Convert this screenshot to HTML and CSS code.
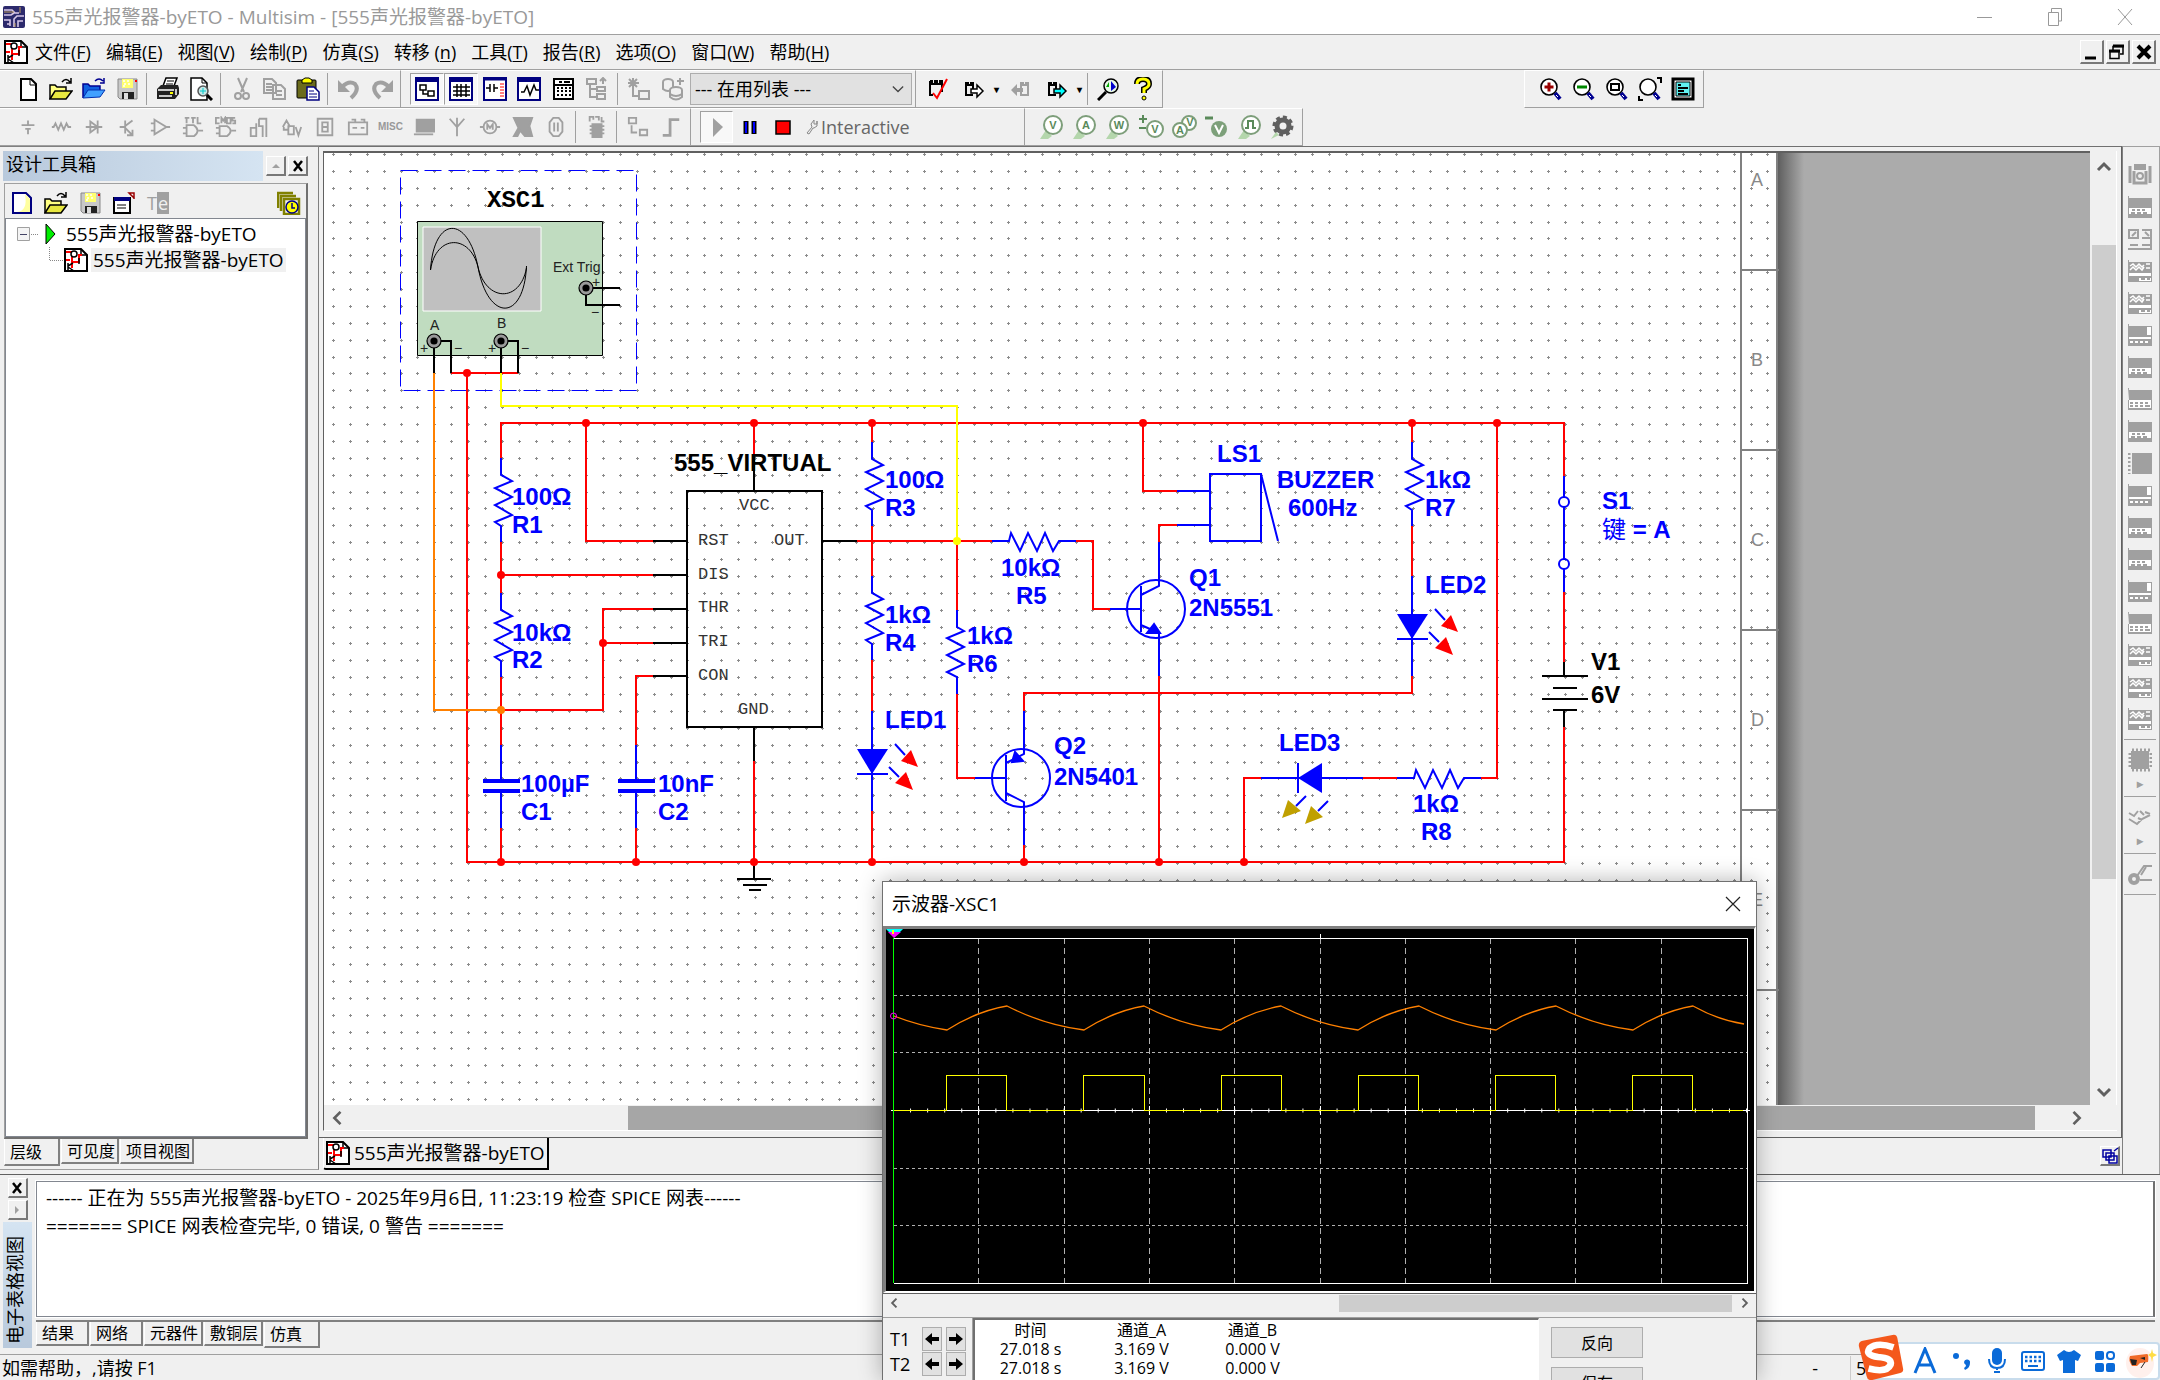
FILE: index.html
```html
<!DOCTYPE html>
<html lang="zh-CN">
<head>
<meta charset="utf-8">
<title>555声光报警器-byETO - Multisim</title>
<link rel="stylesheet" href="styles.css">
</head>
<body>
<svg class="defs" aria-hidden="true">
  <defs>
    <symbol id="i-doc" viewBox="0 0 24 24"><path d="M1 1h16l6 6v16H1z" fill="#fff" stroke="#000" stroke-width="2"/><path d="M17 1v6h6" fill="none" stroke="#000" stroke-width="1.5"/><path d="M2 4h6v16M8 14h7V7h3M2 12h4" fill="none" stroke="#f00" stroke-width="2"/><circle cx="10" cy="6" r="3" fill="#fff" stroke="#000" stroke-width="1.5"/><path d="M4 15v7M4 18l5-3M4 19l6 4M15 10v6" stroke="#000" stroke-width="1.5"/></symbol>
    <symbol id="i-open" viewBox="0 0 24 24"><path d="M1 22V8h5l2 2h9v4" fill="#ffff80" stroke="#000" stroke-width="1.5"/><path d="M1 22l5-8h17l-6 8z" fill="#e8e840" stroke="#000" stroke-width="1.5"/><path d="M13 5q4-5 8 0M22 1v5h-5" fill="none" stroke="#000" stroke-width="1.5"/></symbol>
    <symbol id="i-save" viewBox="0 0 24 24"><path d="M3 2h19v20H5l-2-2z" fill="#c8c8c8" stroke="#888"/><path d="M7 2h11v9H7z" fill="#ffff70"/><path d="M8 4h2M12 4h2M9 7h2M13 7h2M8 9h2" stroke="#fff" stroke-width="1.5"/><path d="M7 15h12v7H7z" fill="#222"/><path d="M9 16h4v6H9z" fill="#ddd"/><path d="M20 4h2" stroke="#f00" stroke-width="2"/></symbol>
    <symbol id="i-mag" viewBox="0 0 24 24"><circle cx="10" cy="10" r="8" fill="#fff" stroke="#000" stroke-width="1.6"/><path d="M16 16l5 6" stroke="#000090" stroke-width="4"/><path d="M17 18l2 2" stroke="#fff"/></symbol>
    <symbol id="i-probe" viewBox="0 0 26 26"><path d="M1 25l6-9 6 6-4 3z" fill="#b4d6ac"/><circle cx="14" cy="11" r="9" fill="#fff" stroke="#7d9e7a" stroke-width="2"/></symbol>
    <symbol id="i-left" viewBox="0 0 12 16"><path d="M10 1L3 8l7 7" fill="none" stroke="#606060" stroke-width="3"/></symbol>
    <symbol id="i-inst1" viewBox="0 0 24 22"><path d="M0 0h1v2h23v20H0V4z" fill="#a0a0a0"/><path d="M1 12h22v6H1z" fill="#fff"/><path d="M4 14h3m2 0h3m2 0h3M3 17h4m2 0h4m2 0h4" stroke="#a0a0a0" stroke-width="2"/></symbol>
    <symbol id="i-inst2" viewBox="0 0 24 22"><path d="M0 0h1v2h23v20H0z" fill="#a0a0a0"/><path d="M1 13h22v2H1zM19 3h4v8h-4z" fill="#fff"/><path d="M2 18h3m2 0h3m2 0h3m2 0h3" stroke="#fff" stroke-width="2"/></symbol>
    <symbol id="i-inst3" viewBox="0 0 24 22"><path d="M0 0h1v2h23v20H0z" fill="#a0a0a0"/><path d="M2 6l3-2 3 3 3-3 3 3 2-2M2 10l3-3 3 3 3-3 3 3 2-3M18 4h4M18 8h4" fill="none" stroke="#fff" stroke-width="1.5"/><path d="M1 13h22v3H1zM11 18h12v3H11z" fill="#fff"/><path d="M13 19h4m2 0h3" stroke="#a0a0a0" stroke-width="2"/></symbol>
    <symbol id="i-inst4" viewBox="0 0 24 22"><path d="M0 0h1v2h23v20H0V12h1z" fill="#a0a0a0"/><path d="M1 12h22v8H1z" fill="#fff"/><path d="M2 15h3m2 0h3m2 0h3m2 0h3M2 18h3m2 0h3m2 0h3m2 0h5" stroke="#a0a0a0" stroke-width="2"/></symbol>
    <symbol id="r-v" overflow="visible"><path d="M0 0V17L11 23L-6 30L11 39L-6 47L11 57L-6 64L0 68V84"/></symbol>
    <symbol id="r-h" overflow="visible"><path d="M0 0H17L19 -8L28 10L36 -8L45 10L53 -8L61 10L67 0H84"/></symbol>
    <symbol id="led" overflow="visible"><path d="M0 -38V62M-15 25H16"/><path d="M-15 0H16L0 25z" fill="#00f" stroke="none"/><path d="M23 -5L33 6M17 18L27 28"/><path d="M39 1L29 12L46 18zM34 23L23 34L41 41z" fill="#f00" stroke="none"/></symbol>
    <symbol id="jack" overflow="visible"><circle r="7" fill="#9a9a9a" stroke="#000" stroke-width="1.2"/><circle r="3.6" fill="#000"/></symbol>
    <pattern id="dots" x="332" y="153" width="135" height="135" patternUnits="userSpaceOnUse">
      <g stroke="#8c8c8c" stroke-width="1" shape-rendering="crispEdges">
        <path id="dotrow" d="M0 1.5h3m-1.5-1.5v3M17 1.5h3m-1.5-1.5v3M34 1.5h3m-1.5-1.5v3M51 1.5h3m-1.5-1.5v3M68 1.5h3m-1.5-1.5v3M84 1.5h3m-1.5-1.5v3M101 1.5h3m-1.5-1.5v3M118 1.5h3m-1.5-1.5v3"/>
        <use href="#dotrow" y="17"/><use href="#dotrow" y="34"/><use href="#dotrow" y="51"/><use href="#dotrow" y="68"/><use href="#dotrow" y="84"/><use href="#dotrow" y="101"/><use href="#dotrow" y="118"/>
      </g>
    </pattern>
    <linearGradient id="shade"><stop offset="0" stop-color="#5c5c5c"/><stop offset="1" stop-color="#ababab"/></linearGradient>
  </defs>
</svg>

<header class="titlebar">
  <svg class="app-icon" viewBox="0 0 22 22"><rect width="22" height="22" rx="2" fill="#2c2a6c"/><path d="M1 4h8l3 3h4M1 9h7l3-2M1 14h6v6M11 21v-8l3-3h7M15 21v-6h5M4 18h3" fill="none" stroke="#d8c8e8" stroke-width="1.6"/><path d="M1 6h10M17 1v6M12 17v4" stroke="#c0a060"/></svg>
  <h1>555声光报警器-byETO - Multisim - [555声光报警器-byETO]</h1>
  <div class="win-controls">
    <button aria-label="最小化"><svg width="16" height="18"><path d="M0 9.500h15" stroke="#999"/></svg></button>
    <button aria-label="还原"><svg width="16" height="20"><path d="M1.500 5.500h10v13h-10zM4.500 5V1.500h10V14H12" fill="none" stroke="#999"/></svg></button>
    <button aria-label="关闭"><svg width="16" height="18"><path d="M1 1l14 16M15 1L1 17" stroke="#999"/></svg></button>
  </div>
</header>

<nav class="menubar">
  <svg class="doc-icon"><use href="#i-doc"/></svg>
  <button>文件(<u>F</u>)</button><button>编辑(<u>E</u>)</button><button>视图(<u>V</u>)</button><button>绘制(<u>P</u>)</button><button>仿真(<u>S</u>)</button><button>转移 (<u>n</u>)</button><button>工具(<u>T</u>)</button><button>报告(<u>R</u>)</button><button>选项(<u>O</u>)</button><button>窗口(<u>W</u>)</button><button>帮助(<u>H</u>)</button>
  <div class="mdi">
    <button class="raised" aria-label="最小化文档"><svg width="20" height="20"><path d="M3 16h11" stroke="#000" stroke-width="3"/></svg></button>
    <button class="raised" aria-label="还原文档"><svg width="20" height="20"><path d="M2 9.500h9v7H2zM5 8V4.500h10V12h-3" fill="none" stroke="#000" stroke-width="1.500"/><path d="M1 9h11M5 4h11" stroke="#000" stroke-width="3"/></svg></button>
    <button class="raised" aria-label="关闭文档"><svg width="20" height="20"><path d="M4 4l12 12M16 4L4 16" stroke="#000" stroke-width="4"/></svg></button>
  </div>
</nav>

<div class="toolbars">
  <div class="toolrow">
    <div class="toolbar main-tools">
      <button aria-label="新建"><svg viewBox="0 0 24 24"><path d="M5 2h10l5 5v16H5z" fill="#fff" stroke="#000" stroke-width="2"/><path d="M14 2v6h6" fill="none" stroke="#000"/></svg></button>
      <button aria-label="打开"><svg><use href="#i-open"/></svg></button>
      <button aria-label="打开示例"><svg viewBox="0 0 24 24"><path d="M1 21V7h5l2 2h10v4" fill="#1060e0" stroke="#000090" stroke-width="1.500"/><path d="M1 21l5-8h17l-5 7z" fill="#40a0ff" stroke="#0030b0"/><path d="M13 4q4-4 8 0M22 1v5h-4" fill="none" stroke="#000090" stroke-width="1.500"/></svg></button>
      <button aria-label="保存"><svg><use href="#i-save"/></svg></button>
      <i class="sep"></i>
      <button aria-label="打印"><svg viewBox="0 0 24 24"><path d="M7 9l3-8h11l-3 8" fill="#fff" stroke="#000" stroke-width="1.500"/><path d="M11 4h7M10 7h7" stroke="#000"/><path d="M1 12l4-4h17l1 3v6l-4 5H1z" fill="#222"/><path d="M2 13h16M3 19h13M20 12v6" stroke="#fff" stroke-width="1.500"/><path d="M14 16h3" stroke="#ff0" stroke-width="2"/></svg></button>
      <button aria-label="打印预览"><svg viewBox="0 0 24 24"><path d="M2 1h11l5 5v17H2z" fill="#fff" stroke="#000" stroke-width="1.500"/><path d="M13 1v5h5" fill="none" stroke="#000"/><circle cx="14" cy="14" r="5" fill="#c8e8e8" stroke="#555" stroke-width="1.500"/><path d="M14 11v6M11 14h6" stroke="#0cc"/><path d="M18 18l5 5" stroke="#000" stroke-width="3"/></svg></button>
      <i class="sep"></i>
      <button aria-label="剪切"><svg viewBox="0 0 24 24"><path d="M8 1l6 14M17 1l-6 14" stroke="#a0a0a0" stroke-width="2"/><circle cx="8" cy="19" r="3" fill="none" stroke="#a0a0a0" stroke-width="2"/><circle cx="16" cy="19" r="3" fill="none" stroke="#a0a0a0" stroke-width="2"/></svg></button>
      <button aria-label="复制"><svg viewBox="0 0 24 24" fill="#f0f0f0" stroke="#a0a0a0" stroke-width="2"><path d="M1 2h8l4 4v10H1zM10 8h8l4 4v10H10zM3 7h6M3 10h6M3 13h6M13 14h6M13 18h6"/></svg></button>
      <button aria-label="粘贴"><svg viewBox="0 0 24 24"><rect x="1" y="3" width="19" height="18" rx="1" fill="#6b6b1c" stroke="#000"/><path d="M6 6V3l3-2h4l3 2v3z" fill="#ff0" stroke="#000"/><path d="M11 10h7l5 5v8H11z" fill="#fff" stroke="#000080" stroke-width="1.500"/><path d="M13 14h5M13 17h8M13 20h8" stroke="#000080"/></svg></button>
      <i class="sep"></i>
      <button aria-label="撤消"><svg viewBox="0 0 24 24"><path d="M5 10q7-7 13-3 5 6-4 14" fill="none" stroke="#a0a0a0" stroke-width="4"/><path d="M1 3v12h12z" fill="#a0a0a0"/></svg></button>
      <button aria-label="重做"><svg viewBox="0 0 24 24"><path d="M19 10q-7-7-13-3-5 6 4 14" fill="none" stroke="#a0a0a0" stroke-width="4"/><path d="M23 3v12H11z" fill="#a0a0a0"/></svg></button>
    </div>
    <div class="toolbar view-tools">
      <button class="on" aria-label="设计工具箱"><svg viewBox="0 0 24 24"><path d="M1 1h22v22H1z" fill="#fff" stroke="#000080" stroke-width="2"/><path d="M1 3h22" stroke="#000080" stroke-width="4"/><path d="M5 8h6v5H5zM13 14h6v5h-6zM8 13v4h5" fill="none" stroke="#000" stroke-width="1.500"/></svg></button>
      <button class="on" aria-label="电子表格视图"><svg viewBox="0 0 24 24"><path d="M1 1h22v22H1z" fill="#fff" stroke="#000080" stroke-width="2"/><path d="M1 3h22" stroke="#000080" stroke-width="4"/><path d="M4 10h17M4 14h17M4 18h17M8 7v13M12 7v13M17 7v13" stroke="#000" stroke-width="1.500"/></svg></button>
      <button aria-label="SPICE 网表查看器"><svg viewBox="0 0 24 24"><path d="M1 1h22v22H1z" fill="#fff" stroke="#000080" stroke-width="2"/><path d="M1 2h22" stroke="#000080" stroke-width="3"/><path d="M3 11h4M11 11h4M7 7v8M11 7v8" stroke="#000" stroke-width="1.500"/><path d="M17 7h4M17 10h4M17 13h4M17 16h4M17 19h4" stroke="#f00"/></svg></button>
      <button aria-label="图示仪"><svg viewBox="0 0 24 24"><path d="M1 1h22v22H1z" fill="#fff" stroke="#000080" stroke-width="2"/><path d="M1 3h22" stroke="#000080" stroke-width="4"/><path d="M4 15h3l3-6 3 9 4-10 2 5h3" fill="none" stroke="#000" stroke-width="1.500"/></svg></button>
      <button aria-label="后处理器"><svg viewBox="0 0 24 24"><path d="M3 2h19v20H3z" fill="#fff" stroke="#000" stroke-width="2"/><path d="M4 8h17" stroke="#000" stroke-width="2"/><path d="M8 5h3M13 5h6M6 11h2M10 11h2M14 11h2M18 11h2M6 14h2M10 14h2M14 14h2M18 14h2M6 18h2M10 18h2M14 18h2M18 18h2" stroke="#000" stroke-width="2"/></svg></button>
      <button aria-label="父图"><svg viewBox="0 0 24 24" fill="none" stroke="#a0a0a0" stroke-width="2"><path d="M2 2h9v5H2zM5 7v13h7M5 12h7M12 10h8v4h-8zM12 17h8v5h-8zM18 7V2M15 4l3-3 3 3"/></svg></button>
      <i class="sep"></i>
      <button aria-label="新建元器件"><svg viewBox="0 0 24 24" fill="none" stroke="#a0a0a0" stroke-width="2"><path d="M6 1v11M1 6h11M2 2l8 8M10 2l-8 8M6 12v7h6M12 14h10v8H12z"/></svg></button>
      <button aria-label="数据库管理器"><svg viewBox="0 0 24 24" fill="#f0f0f0" stroke="#a0a0a0" stroke-width="2"><ellipse cx="7" cy="5" rx="5" ry="3"/><path d="M2 5v7q5 4 10 0V5"/><ellipse cx="15" cy="13" rx="6" ry="3"/><path d="M9 13v7q6 5 12 0v-7M9 17q6 4 12 0M19 1v7M16 4h7"/></svg></button>
      <label class="combo"><select aria-label="在用列表"><option>--- 在用列表 ---</option></select><svg viewBox="0 0 14 10"><path d="M1 2l6 6 6-6" fill="none" stroke="#444" stroke-width="1.500"/></svg></label>
    </div>
    <div class="toolbar check-tools">
      <button aria-label="电气规则检查"><svg viewBox="0 0 24 24"><path d="M5 4h2v3h3V4h2v3h3V4h2v11M5 4v14h3" fill="none" stroke="#000" stroke-width="2"/><path d="M8 16l4 5L22 2" fill="none" stroke="#f00" stroke-width="2"/></svg></button>
      <button aria-label="转移到布局"><svg viewBox="0 0 24 24"><path d="M11 18H4V6h2v2h3V6h2v6" fill="none" stroke="#000" stroke-width="2"/><path d="M9 12h6V8l6 6-6 6v-4H9z" fill="#fff" stroke="#000" stroke-width="1.500"/></svg></button>
      <b class="drop">▾</b>
      <button aria-label="反向注解"><svg viewBox="0 0 24 24"><path d="M13 18h7V6h-2v2h-3V6h-2z" fill="none" stroke="#a0a0a0" stroke-width="2"/><path d="M15 11H9V7l-6 6 6 6v-4h6z" fill="#a0a0a0"/></svg></button>
      <button aria-label="正向注解"><svg viewBox="0 0 24 24"><path d="M11 18H4V6h2v2h3V6h2v6" fill="none" stroke="#000" stroke-width="2"/><path d="M9 12h6V8l6 6-6 6v-4H9z" fill="#0ff" stroke="#000" stroke-width="1.500"/></svg></button>
      <b class="drop">▾</b>
      <i class="sep"></i>
      <button class="slim" aria-label="查找范例"><svg viewBox="0 0 24 24"><path d="M9 15l-8 8" stroke="#000" stroke-width="3"/><circle cx="14" cy="9" r="7" fill="#e8f8e8" stroke="#000" stroke-width="1.500"/><path d="M14 4v10l5-4z" fill="#00c"/><path d="M12 5l-3 5h3z" fill="#0a0"/></svg></button>
      <button class="slim" aria-label="帮助"><svg viewBox="0 0 24 24"><path d="M6 7q0-5 6-5t6 5q0 3-5 5v4" fill="none" stroke="#000" stroke-width="6"/><path d="M6 7q0-5 6-5t6 5q0 3-5 5v4" fill="none" stroke="#ff0" stroke-width="3"/><circle cx="13" cy="21" r="2" fill="#ff0" stroke="#000"/></svg></button>
    </div>
    <div class="toolbar zoom-tools">
      <button aria-label="放大"><svg><use href="#i-mag"/><path d="M10 5.500v9M5.500 10h9" stroke="#900" stroke-width="3"/></svg></button>
      <button aria-label="缩小"><svg><use href="#i-mag"/><path d="M5 10h10" stroke="#080" stroke-width="3"/></svg></button>
      <button aria-label="缩放区域"><svg><use href="#i-mag"/><path d="M6 7h8v6H6z" fill="none" stroke="#000" stroke-width="2"/></svg></button>
      <button aria-label="缩放页面"><svg><use href="#i-mag"/><path d="M19 1h4v5M1 19v4h4" fill="none" stroke="#000" stroke-width="2"/></svg></button>
      <button aria-label="全屏"><svg viewBox="0 0 24 24"><path d="M2 2h20v20H2z" fill="#fff" stroke="#000" stroke-width="3"/><path d="M5 5h14v14H5z" fill="#60f0f0" stroke="#000"/><path d="M7 8h3M7 11h10M7 14h6M7 17h10" stroke="#000" stroke-width="2"/></svg></button>
    </div>
  </div>
  <div class="toolrow">
    <div class="toolbar part-tools">
      <button aria-label="源"><svg viewBox="0 0 24 24"><path d="M12 5v5M5 10h14M9 14h6M12 14v6"/></svg></button>
      <button aria-label="基本"><svg viewBox="0 0 24 24"><path d="M2 12h2l2-4 3 7 3-7 3 7 3-7 2 4h3"/></svg></button>
      <button aria-label="二极管"><svg viewBox="0 0 24 24"><path d="M3 12h18M8 6l8 6-8 6zM16 5v14"/></svg></button>
      <button aria-label="晶体管"><svg viewBox="0 0 24 24"><path d="M4 12h6M10 5v14M10 11l8-6M10 13l8 8M18 15v6h-6"/></svg></button>
      <button aria-label="模拟"><svg viewBox="0 0 24 24"><path d="M6 4l13 8-13 8zM2 8h4M2 16h4M19 12h4"/></svg></button>
      <button aria-label="TTL"><svg viewBox="0 0 24 24"><path d="M3 2h5M5 2v6M10 2h5M12 2v6M17 1v7h4M5 10h8q8 6 0 12H5zM1 13h4M1 19h4M18 16h5"/></svg></button>
      <button aria-label="CMOS"><svg viewBox="0 0 24 24"><path d="M5 2H1v6h4M7 8V2l2 3 2-3v6M13 2h4v6h-4zM22 2h-3v3h3v3h-3M5 11h8q8 5 0 11H5zM1 13h4M1 19h4M18 16h5"/></svg></button>
      <button aria-label="其他数字"><svg viewBox="0 0 24 24"><path d="M3 13h6v9H3zM9 8v14M12 3h8v20M12 3v8h4v12"/></svg></button>
      <button aria-label="混合"><svg viewBox="0 0 24 24"><path d="M2 12l4-7 4 7M8 11h6v9H8zM16 12l3 9 3-9M3 12v3h5"/></svg></button>
      <button aria-label="指示器"><svg viewBox="0 0 24 24"><path d="M4 3h16v18H4zM9 7h6v5H9zM9 12h6v5H9z"/></svg></button>
      <button aria-label="功率"><svg viewBox="0 0 24 24"><path d="M2 7h20v13H2zM5 4h4v3M15 4h4v3M6 13h5M15 13h4"/></svg></button>
      <button class="misc" aria-label="杂项">MISC</button>
      <button aria-label="高级外设"><svg viewBox="0 0 24 24"><path d="M4 4h19v13H4z" fill="#a0a0a0"/><path d="M1 20h21"/></svg></button>
      <button aria-label="射频"><svg viewBox="0 0 24 24"><path d="M12 2v20M4 3l8 9 8-9"/></svg></button>
      <button aria-label="机电"><svg viewBox="0 0 24 24"><circle cx="12" cy="12" r="7"/><path d="M1 12h4M19 12h4M9 15V9l3 4 3-4v6"/></svg></button>
      <button aria-label="NI 元器件"><svg viewBox="0 0 24 24"><path d="M2 2h20l-3 9 3 11h-8l-5-6-3 6H2l5-9z" fill="#a0a0a0"/></svg></button>
      <button aria-label="连接器"><svg viewBox="0 0 24 24"><path d="M9 2h6l4 5v10l-4 5H9l-4-5V7zM10 7v10M14 7v10"/></svg></button>
      <i class="sep"></i>
      <button aria-label="微控制器"><svg viewBox="0 0 24 24"><path d="M4 6V1h4v3M10 1h4v4M17 1v5h3"/><path d="M7 9h10v14H7z" fill="#a0a0a0"/><path d="M4 11h16M4 15h16M4 19h16"/></svg></button>
      <i class="sep"></i>
      <button aria-label="层次块"><svg viewBox="0 0 24 24"><path d="M2 2h8v6H2zM14 15h8v6h-8zM5 10v8h6"/></svg></button>
      <button aria-label="总线"><svg viewBox="0 0 24 24" stroke-width="3"><path d="M3 21h8V4h10"/></svg></button>
    </div>
    <div class="toolbar sim-tools">
      <button class="on" aria-label="运行"><svg viewBox="0 0 24 24"><path d="M8 3l10 9-10 10z" fill="#a0a0a0"/></svg></button>
      <button aria-label="暂停"><svg viewBox="0 0 24 24"><path d="M8 6v13M16 6v13" stroke="#000" stroke-width="5"/><path d="M8 7v11M16 7v11" stroke="#00f" stroke-width="2"/></svg></button>
      <button aria-label="停止"><svg viewBox="0 0 24 24"><path d="M5 6h14v13H5z" fill="#f00" stroke="#000" stroke-width="1.500"/></svg></button>
      <button class="interactive"><svg viewBox="0 0 12 16"><path d="M1 14l5-6-1-3 3-4v4h3l0-3 0 5-3 2H7l-4 6z" fill="none" stroke="#888"/></svg>Interactive</button>
    </div>
    <div class="toolbar probe-tools">
      <button aria-label="电压探针"><svg><use href="#i-probe"/><text x="14" y="15">V</text></svg></button>
      <button aria-label="电流探针"><svg><use href="#i-probe"/><text x="14" y="15">A</text></svg></button>
      <button aria-label="功率探针"><svg><use href="#i-probe"/><text x="14" y="15">W</text></svg></button>
      <button aria-label="差分探针"><svg viewBox="0 0 26 26"><circle cx="17" cy="15" r="8" fill="#fff" stroke="#7d9e7a" stroke-width="2"/><path d="M1 5h8M5 1v8M1 14h7" stroke="#5a8a5a" stroke-width="2"/><text x="17" y="19">V</text></svg></button>
      <button aria-label="电压电流探针"><svg viewBox="0 0 26 26"><circle cx="18" cy="9" r="7" fill="#fff" stroke="#7d9e7a" stroke-width="2"/><circle cx="9" cy="16" r="7" fill="#fff" stroke="#7d9e7a" stroke-width="2"/><text x="9" y="20">A</text><text x="19" y="12">V</text></svg></button>
      <button aria-label="参考探针"><svg viewBox="0 0 26 26"><path d="M1 4h8" stroke="#5a8a5a" stroke-width="3"/><circle cx="15" cy="15" r="8" fill="#7da07a"/><path d="M11 11l4 8 4-8" fill="none" stroke="#fff" stroke-width="2"/></svg></button>
      <button aria-label="数字探针"><svg><use href="#i-probe"/><path d="M8 14h3V7h5v7h3" fill="none" stroke="#5a8a5a" stroke-width="2"/></svg></button>
      <button aria-label="探针设置"><svg viewBox="0 0 26 26"><circle cx="13" cy="12" r="6" fill="none" stroke="#606060" stroke-width="5"/><circle cx="13" cy="12" r="9" fill="none" stroke="#606060" stroke-width="3" stroke-dasharray="4 3"/><path d="M1 25l5-7 3 3z" fill="#b4d6ac"/></svg></button>
    </div>
  </div>
</div>

<main class="workspace">
  <aside class="toolbox">
    <div class="toolbox-head"><h2>设计工具箱</h2>
      <button class="raised" aria-label="折叠"><svg width="14" height="14"><path d="M3 9l4-4 4 4z" fill="#a0a0a0"/></svg></button>
      <button class="raised" aria-label="关闭面板"><svg width="14" height="14"><path d="M3 2l8 10M11 2L3 12" stroke="#000" stroke-width="2.500"/></svg></button>
    </div>
    <div class="toolbox-frame">
      <div class="toolbox-tools">
        <button aria-label="新建"><svg viewBox="0 0 24 24"><path d="M3 2h13l5 5v15H3z" fill="#fff" stroke="#000080" stroke-width="2"/><path d="M15 3l5 5v13H7q11-1 8-18" fill="#ffffa0"/></svg></button>
        <button aria-label="打开"><svg><use href="#i-open"/></svg></button>
        <button aria-label="保存"><svg><use href="#i-save"/></svg></button>
        <button aria-label="关闭"><svg viewBox="0 0 24 24"><path d="M2 7h16v15H2z" fill="#fff" stroke="#000" stroke-width="2"/><path d="M2 8h16" stroke="#000080" stroke-width="4"/><path d="M5 14h9M5 17h9" stroke="#000"/><path d="M22 8V2h-5l5 5" fill="none" stroke="#900" stroke-width="1.500"/></svg></button>
        <button aria-label="重命名" class="rename">T<span>e</span></button>
        <button aria-label="历史" class="history"><svg viewBox="0 0 24 24"><path d="M1 17V2h15M4 20V5h15M7 23V8h15v15z" fill="none" stroke="#808000" stroke-width="2.500"/><circle cx="15" cy="16" r="6" fill="#ff0" stroke="#000080" stroke-width="1.500"/><path d="M15 12v5h3" fill="none" stroke="#000080" stroke-width="1.500"/></svg></button>
      </div>
      <ul class="tree">
        <li><svg viewBox="0 0 44 26"><path d="M1.500 6.500h12v13h-12z" fill="#f4f4f4" stroke="#a0a0a0"/><path d="M4 13.500h7" stroke="#446"/><path d="M15 13.500h8" stroke="#888" stroke-dasharray="1 1"/><path d="M30 3v20l9-10z" fill="#0e0" stroke="#000"/></svg><span>555声光报警器-byETO</span></li>
        <li class="child"><svg viewBox="0 0 44 26"><path d="M3.500 0v13.500h14" fill="none" stroke="#888" stroke-dasharray="1 1"/><use href="#i-doc" x="18" y="1" width="24" height="24"/></svg><span class="sel">555声光报警器-byETO</span></li>
      </ul>
    </div>
    <div class="tabs side-tabs"><button class="active">层级</button><button>可见度</button><button>项目视图</button></div>
  </aside>

  <section class="document">
    <div class="doc-frame">
      <div class="viewport">
        <svg class="schematic" viewBox="324 153 1480 953">
          <path d="M324 153h1453v953H324z" fill="#fff"/>
          <path d="M324 153h1453v953H324z" fill="url(#dots)"/>
          <path d="M1777 153h27v953h-27z" fill="url(#shade)"/>
          <g stroke="#808080" stroke-width="2"><path d="M1741 153v953M1777 153v953M1741 270h38M1741 450h38M1741 630h38M1741 810h38M1741 990h38"/></g>
          <g class="zone"><text x="1751" y="186">A</text><text x="1751" y="366">B</text><text x="1751" y="546">C</text><text x="1751" y="726">D</text><text x="1751" y="906">E</text></g>

          <path d="M400.500 170.500H636.500V390.500H400.500z" fill="none" stroke="#00f" stroke-dasharray="17 7"/>
          <path d="M417.500 221.500h185v134h-185z" fill="#c0dcc0" stroke="#000"/>
          <path d="M423 227h118v84H423z" fill="#c0c0c0" stroke="#fff"/>
          <path d="M430.500 270C434 215 468 215 478 267C488 322 524 322 526.500 266M430.500 270C436 234 470 234 478 267C486 302 520 303 526.500 268" fill="none" stroke="#000"/>
          <g class="tiny"><text x="553" y="272">Ext Trig</text><text x="430" y="330">A</text><text x="497" y="328">B</text><text x="420" y="353">+</text><text x="454" y="353">−</text><text x="488" y="353">+</text><text x="521" y="353">−</text><text x="592" y="287">+</text><text x="591" y="317">−</text></g>

          <g class="wire red">
            <path d="M451 373H518M467 373V862H1564V727M501 458V423H1564V476M501 541V593M586 423V541H653M501 575H653M653 609H603V710H501M603 643H653M501 676V745M501 828V862M653 676H636V745M636 828V862M754 423V458M754 761V862M857 541H992M872 423V442M872 525V576M872 660V711M872 811V862M957 541V610M957 693V778H975M1075 541H1093V609H1110M1143 423V491H1177M1177 525H1159V542M1159 676V862M1412 423V442M1412 525V576M1412 676V693H1024V711M1024 845V862M1244 862V778H1261M1363 778H1397M1480 778H1497V423M1564 592V662"/>
          </g>
          <path class="wire orange" d="M434 373V710H501"/>
          <path class="wire yellow" d="M501 373V406H957V541"/>
          <g class="wire black">
            <path d="M434 341V373M434 341H451V373M501 341V373M501 341H518V373M586 288H620M586 291V305H620M687 491H822V727H687zM754 458V491M653 541H687M653 575H687M653 609H687M653 643H687M653 676H687M822 541H857M754 727V761M754 862V879M737 879H771M743 885H767M749 890H761M1564 662V676M1542 676H1588M1553 688H1577M1542 699H1588M1553 710H1577M1564 710V727"/>
          </g>
          <use href="#jack" x="434" y="341"/><use href="#jack" x="501" y="341"/><use href="#jack" x="586" y="288"/>
          <g class="wire blue">
            <use href="#r-v" x="501" y="458"/><use href="#r-v" x="501" y="593"/><use href="#r-v" x="872" y="442"/><use href="#r-v" x="872" y="576"/><use href="#r-v" x="1412" y="442"/>
            <path d="M957 610V627L964 631L947 638L964 647L947 655L964 664L947 672L957 677V694"/>
            <use href="#r-h" x="992" y="541"/><use href="#r-h" x="1397" y="778"/>
            <use href="#led" x="872" y="749"/><use href="#led" x="1412" y="614"/>
            <path d="M501 745V780M501 792V828M636 745V780M636 792V828"/>
            <path d="M483 781H520M483 791H520M618 781H655M618 791H655" stroke-width="4"/>
            <circle cx="1156" cy="609" r="29"/><path d="M1110 609H1141M1141 586V632M1141 595L1159 586V542M1141 625L1159 633V676"/><path d="M1154 624L1147 633H1160z" fill="#00f"/>
            <circle cx="1021" cy="778" r="29"/><path d="M975 778H1006M1006 755V801M1006 763L1024 754V711M1006 793L1024 802V845"/><path d="M1015 752L1023 761L1012 762z" fill="#00f"/>
            <path d="M1210 474H1261V541H1210zM1261 474L1278 541M1177 491H1210M1177 525H1210"/>
            <path d="M1261 778H1363M1298 763V793M1306 796L1296 806M1328 801L1318 811"/><path d="M1322 763V793L1298 778z" fill="#00f" stroke="none"/>
            <path d="M1564 476V497M1564 507V559M1564 569V592"/><circle cx="1564" cy="502" r="5"/><circle cx="1564" cy="564" r="5"/>
          </g>
          <path d="M1288 800L1301 811L1282 818zM1311 806L1323 817L1305 824z" fill="#c0a000"/>
          <g fill="#f00"><circle cx="467" cy="373" r="4"/><circle cx="586" cy="423" r="4"/><circle cx="754" cy="423" r="4"/><circle cx="872" cy="423" r="4"/><circle cx="1143" cy="423" r="4"/><circle cx="1412" cy="423" r="4"/><circle cx="1497" cy="423" r="4"/><circle cx="501" cy="575" r="4"/><circle cx="603" cy="643" r="4"/><circle cx="501" cy="862" r="4"/><circle cx="636" cy="862" r="4"/><circle cx="754" cy="862" r="4"/><circle cx="872" cy="862" r="4"/><circle cx="1024" cy="862" r="4"/><circle cx="1159" cy="862" r="4"/><circle cx="1244" cy="862" r="4"/></g>
          <circle cx="501" cy="710" r="4" fill="#ff8000"/><circle cx="957" cy="541" r="4" fill="#ff0"/>

          <g class="label">
            <text x="512" y="505">100Ω</text><text x="512" y="533">R1</text><text x="512" y="641">10kΩ</text><text x="512" y="668">R2</text>
            <text x="885" y="488">100Ω</text><text x="885" y="516">R3</text><text x="885" y="623">1kΩ</text><text x="885" y="651">R4</text>
            <text x="967" y="644">1kΩ</text><text x="967" y="672">R6</text><text x="885" y="728">LED1</text>
            <text x="521" y="792">100µF</text><text x="521" y="820">C1</text><text x="658" y="792">10nF</text><text x="658" y="820">C2</text>
            <text x="1001" y="576">10kΩ</text><text x="1016" y="604">R5</text><text x="1054" y="754">Q2</text><text x="1054" y="785">2N5401</text>
            <text x="1189" y="586">Q1</text><text x="1189" y="616">2N5551</text><text x="1217" y="462">LS1</text><text x="1277" y="488">BUZZER</text><text x="1288" y="516">600Hz</text>
            <text x="1425" y="488">1kΩ</text><text x="1425" y="516">R7</text><text x="1425" y="593">LED2</text><text x="1279" y="751">LED3</text>
            <text x="1413" y="812">1kΩ</text><text x="1421" y="840">R8</text><text x="1602" y="509">S1</text><text x="1602" y="538"><tspan class="key">键</tspan> = A</text>
          </g>
          <g class="label dark"><text x="674" y="471">555_VIRTUAL</text><text x="1591" y="670">V1</text><text x="1591" y="703">6V</text><text class="mono" x="487" y="207">XSC1</text></g>
          <g class="pin"><text x="739" y="510">VCC</text><text x="698" y="545">RST</text><text x="774" y="545">OUT</text><text x="698" y="579">DIS</text><text x="698" y="612">THR</text><text x="698" y="646">TRI</text><text x="698" y="680">CON</text><text x="738" y="714">GND</text></g>
        </svg>
      </div>
      <div class="vscroll"><svg class="up" width="16" height="12"><path d="M2 10l6-6 6 6" fill="none" stroke="#606060" stroke-width="3"/></svg><i></i><svg width="16" height="12"><path d="M2 2l6 6 6-6" fill="none" stroke="#606060" stroke-width="3"/></svg></div>
      <div class="hscroll"><svg class="arrow"><use href="#i-left"/></svg><i></i><svg class="arrow flip"><use href="#i-left"/></svg></div>
    </div>
    <div class="doc-tabs">
      <button class="doc-tab"><svg class="doc-icon"><use href="#i-doc"/></svg>555声光报警器-byETO</button>
      <button class="raised cascade" aria-label="窗口列表"><svg viewBox="0 0 18 18" fill="#f0f0f0" stroke="#0000a0" stroke-width="1.500"><path d="M2 3h8v7H2zM5 6h8v7H5zM8 9h8v7H8zM13 4l4-3"/></svg></button>
    </div>
  </section>

  <aside class="instruments">
    <button aria-label="万用表"><svg viewBox="0 0 24 24"><path d="M6 1h12v6H6z" fill="#a0a0a0"/><path d="M2 3v17M22 3v17M6 8v12h12V8" fill="none" stroke="#a0a0a0" stroke-width="3"/><circle cx="12" cy="13" r="3" fill="none" stroke="#a0a0a0" stroke-width="2"/></svg></button>
    <button aria-label="函数发生器"><svg><use href="#i-inst1"/></svg></button>
    <button aria-label="瓦特计"><svg viewBox="0 0 24 22"><path d="M1 2h9v8H1zM14 2h9v8h-9M23 10v11H0M4 8l4-4M17 4l4 4M2 17h8M14 17h8" fill="none" stroke="#a0a0a0" stroke-width="2"/></svg></button>
    <button aria-label="示波器"><svg><use href="#i-inst3"/></svg></button>
    <button aria-label="四通道示波器"><svg><use href="#i-inst3"/></svg></button>
    <button aria-label="波特测试仪"><svg><use href="#i-inst2"/></svg></button>
    <button aria-label="频率计"><svg><use href="#i-inst1"/></svg></button>
    <button aria-label="字发生器"><svg><use href="#i-inst4"/></svg></button>
    <button aria-label="逻辑变换器"><svg><use href="#i-inst1"/></svg></button>
    <button aria-label="逻辑分析仪"><svg viewBox="0 0 24 22"><path d="M4 1h20v21H4z" fill="#a0a0a0"/><path d="M1 1v21" stroke="#a0a0a0" stroke-width="3" stroke-dasharray="2 2"/></svg></button>
    <button aria-label="IV 分析仪"><svg><use href="#i-inst2"/></svg></button>
    <button aria-label="失真分析仪"><svg><use href="#i-inst1"/></svg></button>
    <button aria-label="光谱分析仪"><svg><use href="#i-inst1"/></svg></button>
    <button aria-label="网络分析仪"><svg><use href="#i-inst2"/></svg></button>
    <button aria-label="Agilent 函数发生器"><svg><use href="#i-inst4"/></svg></button>
    <button aria-label="Agilent 万用表"><svg><use href="#i-inst3"/></svg></button>
    <button aria-label="Agilent 示波器"><svg><use href="#i-inst3"/></svg></button>
    <button aria-label="Tektronix 示波器"><svg><use href="#i-inst3"/></svg></button>
    <hr>
    <button aria-label="LabVIEW 仪器"><svg viewBox="0 0 24 24"><path d="M3 3h18v18H3z" fill="#a0a0a0"/><path d="M4 2h18M4 22h18" stroke="#a0a0a0" stroke-width="3" stroke-dasharray="2 2"/><path d="M2 5v15M23 5v15" stroke="#a0a0a0" stroke-width="3" stroke-dasharray="2 2"/></svg></button>
    <b class="more">▸</b>
    <hr>
    <button aria-label="NI ELVISmx"><svg viewBox="0 0 24 24" fill="none" stroke="#a0a0a0" stroke-width="2"><path d="M1 8l5 3 4-5M12 6l4 4M1 14l8 5 5-5 8-4M10 13l4 2M17 7l5 2"/></svg></button>
    <b class="more">▸</b>
    <hr>
    <button aria-label="电流探针"><svg viewBox="0 0 24 24" fill="none" stroke="#a0a0a0" stroke-width="2"><circle cx="6" cy="17" r="4" stroke-width="4"/><path d="M9 14l7-10h8M12 18h12M13 13l5-8"/></svg></button>
    <hr>
  </aside>
</main>

<section class="sheet">
  <div class="sheet-side">
    <button class="raised" aria-label="关闭视图"><svg width="14" height="14"><path d="M3 2l8 10M11 2L3 12" stroke="#000" stroke-width="2.500"/></svg></button>
    <button class="raised" aria-label="展开视图"><svg width="14" height="14"><path d="M5 3l4 4-4 4z" fill="#a0a0a0"/></svg></button>
    <span class="sheet-title">电子表格视图</span>
  </div>
  <div class="sheet-main">
    <div class="log"><p>------ 正在为 555声光报警器-byETO - 2025年9月6日, 11:23:19 检查 SPICE 网表------</p><p>======= SPICE 网表检查完毕, 0 错误, 0 警告 =======</p></div>
    <div class="tabs sheet-tabs"><button>结果</button><button>网络</button><button>元器件</button><button>敷铜层</button><button class="active">仿真</button></div>
  </div>
</section>

<footer class="status"><span>如需帮助，,请按 F1</span><span class="dash">-</span><span class="num">5</span></footer>

<section class="scope">
  <header><h2>示波器-XSC1</h2><button aria-label="关闭示波器"><svg width="18" height="18"><path d="M2 2l14 14M16 2L2 16" stroke="#222" stroke-width="1.200"/></svg></button></header>
  <div class="screen">
    <svg viewBox="886 929 868 362" preserveAspectRatio="none">
      <path d="M886 929h868v362H886z"/>
      <g stroke="#b0b0b0" stroke-dasharray="6 4" fill="none" shape-rendering="crispEdges"><path d="M978.500 938v345M1064.500 938v345M1149.500 938v345M1234.500 938v345M1320.500 938v345M1405.500 938v345M1490.500 938v345M1575.500 938v345M1661.500 938v345"/><path d="M894 995.500h853M894 1052.500h853M894 1168.500h853M894 1225.500h853" stroke-dasharray="3 3"/></g>
      <path d="M894 938H1747V1283H894M891 1110.500H1750M1320.500 934v4" fill="none" stroke="#fff" shape-rendering="crispEdges"/>
      <path d="M893 1110.500H1747" stroke="#fff" stroke-width="4" stroke-dasharray="1 16.060"/>
      <path d="M978.500 1106v9M1064.500 1106v9M1149.500 1106v9M1234.500 1106v9M1320.500 1106v9M1405.500 1106v9M1490.500 1106v9M1575.500 1106v9M1661.500 1106v9" stroke="#fff"/>
      <path d="M893.500 938v345" stroke="#0f0"/>
      <path d="M894 1016Q919 1026 947 1030Q977 1011 1007 1006Q1044 1025 1084 1030Q1114 1011 1144 1006Q1181 1025 1221 1030Q1251 1011 1281 1006Q1318 1025 1358 1030Q1388 1011 1419 1006Q1456 1025 1496 1030Q1526 1011 1556 1006Q1593 1025 1633 1030Q1663 1011 1693 1006Q1718 1020 1744 1024" fill="none" stroke="#ff8000" stroke-width="1.300"/>
      <path d="M894 1110.500H946.500V1075.500H1006.500V1110.500H1083.500V1075.500H1144.500V1110.500H1221.500V1075.500H1281.500V1110.500H1358.500V1075.500H1418.500V1110.500H1495.500V1075.500H1555.500V1110.500H1632.500V1075.500H1692.500V1110.500H1743" fill="none" stroke="#ff0" shape-rendering="crispEdges"/>
      <circle cx="893.500" cy="1016" r="3" fill="none" stroke="#f0f"/>
      <path d="M886 929h17l-3 3h-11z" fill="#0ff"/><path d="M888 932h13l-7 6z" fill="#f0f"/><path d="M893 930v4" stroke="#ff0" stroke-width="2"/>
    </svg>
  </div>
  <div class="scope-scroll"><svg><use href="#i-left"/></svg><i></i><svg class="flip"><use href="#i-left"/></svg></div>
  <div class="readout">
    <div class="cursors">
      <span>T1</span><button aria-label="T1 左移"><svg viewBox="0 0 16 16"><path d="M1 8l7-6v4h7v4H8v4z"/></svg></button><button aria-label="T1 右移"><svg viewBox="0 0 16 16"><path d="M15 8L8 2v4H1v4h7v4z"/></svg></button>
      <span>T2</span><button aria-label="T2 左移"><svg viewBox="0 0 16 16"><path d="M1 8l7-6v4h7v4H8v4z"/></svg></button><button aria-label="T2 右移"><svg viewBox="0 0 16 16"><path d="M15 8L8 2v4H1v4h7v4z"/></svg></button>
    </div>
    <div class="values"><table><tr><th>时间</th><th>通道_A</th><th>通道_B</th></tr><tr><td>27.018 s</td><td>3.169 V</td><td>0.000 V</td></tr><tr><td>27.018 s</td><td>3.169 V</td><td>0.000 V</td></tr></table></div>
    <div class="actions"><button>反向</button><button>保存</button></div>
  </div>
</section>

<div class="ime">
  <svg class="ime-logo" viewBox="0 0 48 48"><path d="M5 7L36 1q4-1 5 3l6 32q1 4-4 5l-28 7q-5 1-6-4L1 13q-1-5 4-6z" fill="#f4581c"/><path d="M37 14Q20 8 12 15q-5 7 9 9 15 1 13 8-4 9-23 4" fill="none" stroke="#fff" stroke-width="7"/></svg>
  <button aria-label="英文"><svg viewBox="0 0 26 28"><path d="M3 26L13 2l10 24M6 18h14" fill="none" stroke="#0a6ad8" stroke-width="3"/></svg></button>
  <button aria-label="标点"><svg viewBox="0 0 26 28" fill="#0a6ad8"><circle cx="8" cy="9" r="3"/><path d="M16 15a3 3 0 1 1 6 1q0 5-5 7l-1-2q2-1 2-3-2-1-2-3"/></svg></button>
  <button aria-label="语音"><svg viewBox="0 0 26 28"><rect x="8" y="1" width="10" height="17" rx="5" fill="#0a6ad8"/><path d="M5 12q0 9 8 9t8-9M13 21v2M10 25h6" fill="none" stroke="#0a6ad8" stroke-width="2"/></svg></button>
  <button aria-label="键盘"><svg viewBox="0 0 26 28"><rect x="2" y="5" width="22" height="18" rx="2" fill="none" stroke="#0a6ad8" stroke-width="2"/><path d="M5 10h17M5 14h17" stroke="#0a6ad8" stroke-width="2.500" stroke-dasharray="2.500 2"/><path d="M8 19h10" stroke="#0a6ad8" stroke-width="2"/></svg></button>
  <button aria-label="皮肤"><svg viewBox="0 0 26 28"><path d="M8 3q5 4 10 0l7 5-3 6-3-1v13H7V13l-3 1-3-6z" fill="#0a6ad8"/></svg></button>
  <button aria-label="工具箱"><svg viewBox="0 0 26 28" fill="#0a6ad8"><rect x="3" y="4" width="9" height="9" rx="2"/><rect x="15" y="5" width="7" height="7" rx="3" fill="none" stroke="#0a6ad8" stroke-width="2"/><rect x="3" y="16" width="9" height="9" rx="2"/><rect x="14" y="16" width="9" height="9" rx="2"/></svg></button>
  <button aria-label="助手"><svg viewBox="0 0 32 36"><ellipse cx="15" cy="20" rx="14" ry="15" fill="#fff0ec"/><path d="M5 13l17-2q2 0 1 8l-8 1-3 3H7q-4-6-2-10z" fill="#f06a28"/><path d="M5 16l7 1-1 5H7zM15 15l5-1v3z" fill="#222"/><path d="M16 25l4-6" stroke="#222"/><path d="M27 6l1 4 4 2-4 2-1 5-1-5-3-2 3-2z" fill="#fd4"/></svg></button>
</div>
</body>
</html>
```
FILE: styles.css
```css
* { box-sizing: border-box; }
html, body { height: 100%; }
body {
  margin: 0; display: flex; flex-direction: column; position: relative; overflow: hidden;
  background: #f0f0f0; color: #000;
  font: 18px/24px "Open Sans", "Noto Sans CJK SC", sans-serif;
}
h1, h2, p, ul { margin: 0; padding: 0; font-size: 18px; font-weight: 400; list-style: none; }
button { font: inherit; color: inherit; border: 0; padding: 0; background: none; display: flex; align-items: center; justify-content: center; flex: none; white-space: nowrap; }
svg { display: block; flex: none; }
.defs { position: absolute; width: 0; height: 0; }

.titlebar { flex: none; height: 35px; display: flex; align-items: center; gap: 7px; padding-left: 3px; background: #fff; border-bottom: 1px solid #a0a0a0; color: #999; }
.app-icon { width: 22px; height: 22px; }
.titlebar h1 { flex: 1; }
.titlebar h1, .tree li, .doc-tab, .log p, .scope h2 { font-size: 19px; }
.win-controls button { width: 70px; height: 34px; }
.win-controls { display: flex; }

.menubar { flex: none; height: 35px; display: flex; align-items: center; gap: 15px; padding: 0 4px; border-bottom: 1px solid #a0a0a0; }
.menubar .doc-icon { margin-right: -8px; }
.menubar u { text-underline-offset: 2px; }
.doc-icon { width: 24px; height: 24px; }
.mdi { margin-left: auto; display: flex; gap: 2px; }
.mdi .raised { width: 24px; height: 24px; }
.raised { background: #f0f0f0; border: 1px solid #fff; border-right: 2px solid #787878; border-bottom: 2px solid #787878; }

.toolbars { flex: none; }
.toolrow { display: flex; height: 38px; }
.toolbar { display: flex; align-items: center; border-top: 1px solid #fff; border-right: 1px solid #a0a0a0; border-bottom: 1px solid #a0a0a0; }
.toolbar button { width: 33px; height: 32px; }
.toolbar svg { width: 24px; height: 24px; }
.sep { flex: none; width: 8px; height: 32px; background: linear-gradient(#a0a0a0, #a0a0a0) 3px 0 / 1px 100% no-repeat; }
.main-tools { padding-left: 11px; padding-right: 2px; }
.view-tools { padding-left: 9px; padding-right: 3px; }
.view-tools button { width: 34px; }
.toolbar .on { background: #f8f8f8; border: 1px solid #a0a0a0; border-right-color: #fff; border-bottom-color: #fff; }
.combo { position: relative; width: 222px; height: 32px; }
.combo select { appearance: none; width: 100%; height: 100%; padding: 0 4px; font: inherit; color: #000; background: #e1e1e1; border: 1px solid #adadad; border-radius: 0; }
.toolbar .combo svg { position: absolute; right: 8px; top: 11px; width: 12px; height: 10px; }
.check-tools { padding-left: 2px; padding-right: 2px; }
.drop { width: 9px; font-size: 10px; text-align: center; }
.check-tools button { width: 37px; }
.check-tools .slim { width: 34px; }
.zoom-tools { margin-left: auto; margin-right: 456px; padding: 0 4px 0 9px; border-left: 1px solid #fff; }
.part-tools { padding-left: 11px; padding-right: 3px; fill: none; stroke: #a0a0a0; stroke-width: 2; }
.part-tools svg { width: 22px; height: 22px; }
.part-tools .misc { font: bold 10px/12px "Liberation Sans", sans-serif; color: #999; }
.sim-tools { padding-left: 9px; width: 334px; }
.sim-tools .interactive { width: auto; gap: 3px; color: #666; margin-left: 7px; }
.sim-tools .interactive svg { width: 12px; height: 16px; }
.probe-tools { padding-left: 10px; padding-right: 3px; }
.probe-tools svg { width: 26px; height: 26px; }
.probe-tools text { font: bold 11px "Liberation Sans", sans-serif; fill: #5a8a5a; text-anchor: middle; }

.workspace { flex: 1; min-height: 0; display: grid; grid-template-columns: 319px minmax(0, 1fr) 38px; grid-template-rows: minmax(0, 1fr); }
.toolbox { display: flex; flex-direction: column; padding: 4px 10px 3px 3px; border-right: 1px solid #808080; border-top: 1px solid #808080; border-bottom: 1px solid #a0a0a0; margin-bottom: 4px; }
.toolbox-head { display: flex; align-items: center; gap: 2px; height: 30px; flex: none; }
.toolbox-head h2 { flex: 1; height: 30px; line-height: 26px; padding-left: 3px; margin-right: 1px; background: linear-gradient(90deg, #b8c9dc, #d5e4f2); }
.raised { width: 20px; height: 20px; }
.toolbox-frame { flex: 1; min-height: 0; display: flex; flex-direction: column; margin-top: 2px; margin-left: 1px; border: 1px solid #a0a0a0; border-right: 2px solid #707070; border-bottom: 2px solid #707070; }
.toolbox-tools { display: flex; align-items: center; height: 34px; flex: none; padding-top: 4px; }
.toolbox-tools button { width: 34px; height: 28px; }
.toolbox-tools svg { width: 24px; height: 24px; }
.rename { color: #a0a0a0; }
.rename span { background: #a0a0a0; color: #f0f0f0; width: 12px; line-height: 22px; }
.toolbox-tools .history { margin-left: auto; }
.tree { flex: 1; background: #fff; border: 1px solid #828790; padding-top: 2px; }
.tree li { display: flex; height: 26px; align-items: center; padding-left: 10px; gap: 6px; }
.tree svg { width: 44px; height: 26px; }
.tree .child { padding-left: 40px; gap: 1px; }
.sel { background: #f0f0f0; padding: 0 2px; }
.tabs { display: flex; flex: none; align-items: flex-start; font-size: 16px; line-height: 22px; gap: 1px; }
.tabs button { height: 25px; padding: 0 2px 0 5px; border-right: 2px solid #808080; border-bottom: 2px solid #808080; border-left: 1px solid #fff; }
.side-tabs { margin-left: 1px; }
.side-tabs .active { width: 56px; justify-content: flex-start; height: 27px; }

.document { display: flex; flex-direction: column; min-width: 0; }
.doc-frame { flex: 1; min-height: 0; display: grid; grid-template: minmax(0, 1fr) 26px / minmax(0, 1fr) 27px; padding: 4px 4px 6px 4px; border-top: 1px solid #707070; border-right: 1px solid #606060; border-bottom: 1px solid #606060; }
.viewport { background: #ababab; overflow: hidden; border-top: 2px solid #606060; border-left: 1px solid #606060; }
.schematic { width: 1480px; height: 953px; }
.vscroll { display: flex; flex-direction: column; align-items: center; padding: 9px 1px 6px 2px; border-right: 1px solid #fff; }
.vscroll i { width: 24px; flex: 0 1 634px; margin: 73px 0 auto; background: #cdcdcd; }
.hscroll { grid-column: 1 / 3; display: flex; align-items: center; padding: 1px 34px 0 7px; border-bottom: 1px solid #fff; border-left: 1px solid #606060; }
.hscroll i { flex: 1; height: 24px; margin: 0 36px 0 285px; background: #a6a6a6; }
.arrow { width: 12px; height: 14px; }
.flip { transform: scaleX(-1); }
.doc-tabs { height: 36px; flex: none; display: flex; align-items: flex-start; padding: 0 2px 0 4px; }
.doc-tab { height: 32px; padding: 0 2px; gap: 4px; border-right: 2px solid #000; border-bottom: 2px solid #000; border-left: 1px solid #fff; border-bottom-left-radius: 3px; background: #f0f0f0; }
.cascade { margin: 8px 0 0 auto; }
.cascade svg { width: 18px; height: 18px; }

.wire { fill: none; stroke-width: 2; }
.red { stroke: #f00; } .blue { stroke: #00f; } .black { stroke: #000; } .orange { stroke: #ff8000; } .yellow { stroke: #ff0; }
.label text { font: bold 24px "Liberation Sans", "Noto Sans CJK SC", sans-serif; fill: #00f; }
.label .key { font-weight: 400; }
.dark text { fill: #000; }
.dark .mono { font-family: "Liberation Mono", monospace; }
.label.dark text { fill: #000; }
.pin text { font: 17px "Liberation Mono", monospace; fill: #333; }
.tiny text { font: 14px "Liberation Sans", sans-serif; fill: #222; }
.zone text { font: 18px "Liberation Sans", sans-serif; fill: #888; }

.instruments { display: flex; flex-direction: column; align-items: center; padding: 12px 2px 0 0; border-left: 1px solid #808080; border-top: 1px solid #a0a0a0; border-right: 1px solid #a0a0a0; }
.instruments button { width: 28px; height: 32px; }
.instruments svg { width: 24px; height: 24px; }
.instruments hr { width: 32px; border: 0; border-top: 1px solid #a0a0a0; margin: 4px 0; }
.more { font-size: 12px; line-height: 16px; color: #a0a0a0; }

.sheet { flex: none; height: 180px; display: flex; gap: 4px; padding: 3px 5px 6px 3px; border-top: 1px solid #606060; }
.sheet-side { width: 29px; display: flex; flex-direction: column; align-items: center; gap: 2px; }
.sheet-title { flex: 1; width: 29px; writing-mode: vertical-rl; text-orientation: sideways; transform: rotate(180deg); padding-top: 4px; background: linear-gradient(#b8c9dc, #d5e4f2); }
.sheet-main { flex: 1; display: flex; flex-direction: column; }
.log { height: 136px; background: #fff; margin-top: 3px; padding: 2px 9px; border: 1px solid #828790; border-right: 2px solid #707070; outline: 1px solid #fff; line-height: 28px; box-shadow: 0 3px #f0f0f0, 0 5px #808080; }
.sheet-tabs { margin-top: 5px; }
.sheet-tabs button { height: 24px; padding-right: 3px; min-width: 53px; justify-content: flex-start; }
.sheet-tabs .active { height: 26px; min-width: 56px; }

.status { flex: none; height: 26px; display: flex; align-items: center; padding-left: 2px; border-top: 1px solid #a0a0a0; }
.status .dash { margin-left: auto; margin-right: 32px; }
.status .num { width: 310px; border-left: 1px solid #ccc; padding-left: 5px; }

.scope { position: absolute; left: 882px; top: 881px; bottom: 0; width: 875px; display: flex; flex-direction: column; overflow: hidden; background: #f0f0f0; border: 1px solid #707070; border-bottom: 0; box-shadow: 0 0 22px rgba(0, 0, 0, .3); }
.scope header { flex: none; display: flex; align-items: center; height: 44px; padding: 0 14px 0 9px; background: #fff; }
.scope h2 { flex: 1; }
.screen { flex: none; border: 3px solid #808080; border-width: 3px 2px 2px 3px; border-right-color: #fff; border-bottom-color: #fff; }
.screen svg { width: 100%; height: 362px; }
.scope-scroll { flex: none; height: 24px; display: flex; align-items: center; padding: 0 7px 5px; border-top: 1px solid #606060; }
.scope-scroll svg { width: 8px; height: 10px; }
.scope-scroll i { height: 17px; flex: 1; margin: 0 9px 0 441px; background: #cdcdcd; }
.readout { flex: 1; min-height: 0; display: flex; border-top: 1px solid #a0a0a0; }
.cursors { flex: none; width: 90px; display: grid; grid-template-columns: 28px 20px 20px; grid-auto-rows: 24px; gap: 1px 4px; padding: 9px 0 0 7px; line-height: 24px; border-right: 1px solid #a0a0a0; }
.cursors button, .actions button { background: #e1e1e1; border: 1px solid #adadad; }
.cursors svg { width: 16px; height: 16px; }
.values { flex: 1; background: #fff; border: 2px solid #707070; border-bottom: 0; border-right: 1px solid #fff; }
.values table { border-collapse: collapse; font-size: 16px; line-height: 19px; text-align: center; }
.values th, .values td { padding: 0; font-weight: 400; width: 111px; }
.values th { line-height: 20px; }
.actions { flex: none; width: 217px; padding: 9px 0 0 12px; display: flex; flex-direction: column; gap: 9px; font-size: 16px; }
.actions button { width: 92px; height: 31px; }

.ime { position: absolute; right: 0; bottom: 0; height: 38px; width: 290px; display: flex; align-items: center; padding-left: 35px; background: #fff; border: 2px solid #c8dcec; border-radius: 4px; }
.ime button { width: 36px; }
.ime button svg { width: 26px; height: 28px; }
.ime button:last-child svg { width: 32px; height: 36px; }
.ime-logo { position: absolute; left: -15px; bottom: -2px; width: 48px; height: 46px; }
```
